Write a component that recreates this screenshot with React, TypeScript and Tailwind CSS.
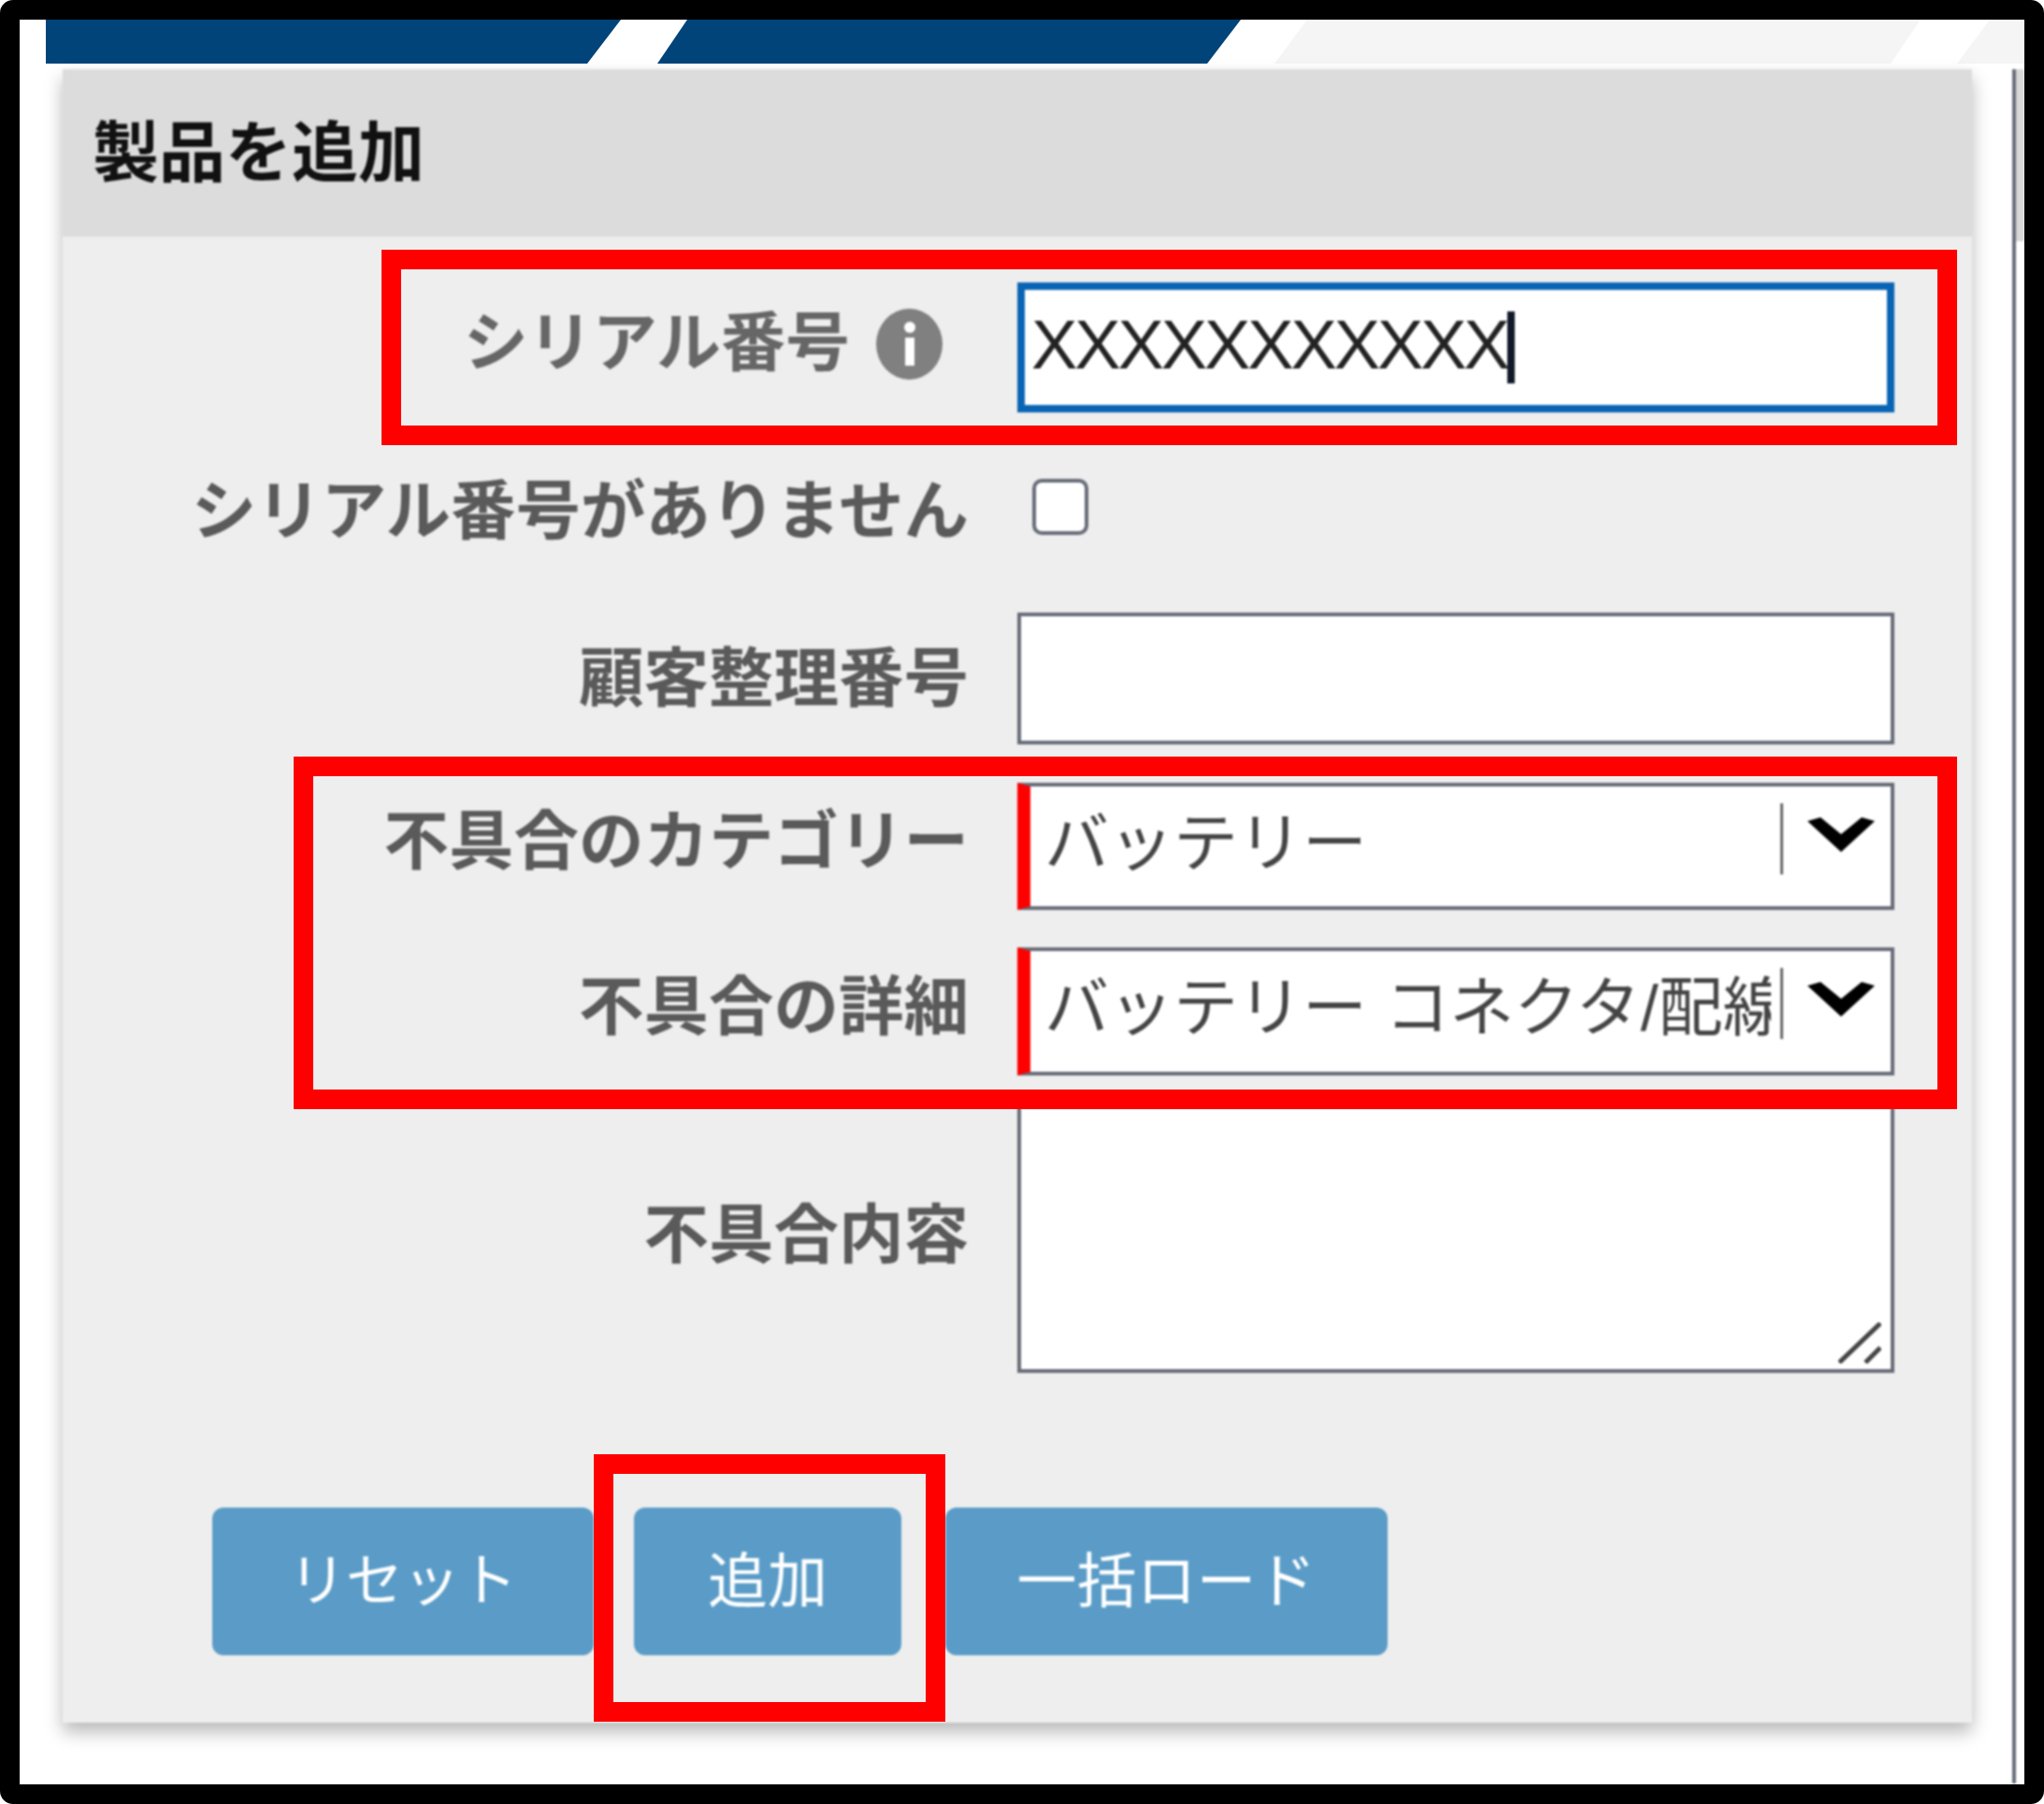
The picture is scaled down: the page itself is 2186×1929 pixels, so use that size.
const labelClass = "w-[969px] shrink-0 text-right text-[69.5px] leading-none font-bold text-[#5a5a5a] whitespace-nowrap";

function Chevron() {
  return (
    <svg width="72" height="37" viewBox="0 0 72 37" className="shrink-0">
      <polygon points="0,4 14,0 36,18 58,0 72,4 36,37" fill="#000" />
    </svg>
  );
}

function InfoIcon() {
  return (
    <svg width="71" height="76" viewBox="0 0 71 76" className="ml-[28px] shrink-0">
      <ellipse cx="35.5" cy="38" rx="35.5" ry="38" fill="#808080" />
      <circle cx="36" cy="20" r="6" fill="#fff" />
      <rect x="31" y="31" width="10" height="30" fill="#fff" />
    </svg>
  );
}

function SelectBox({ text }: { text: string }) {
  return (
    <div className="flex h-full w-[938px] border-[4px] border-l-[14px] border-[#666b77] border-l-[#f00] bg-white">
      <div className="mt-[-6px] ml-[15px] flex min-w-0 flex-1 items-center overflow-hidden text-[69px] leading-none whitespace-nowrap text-[#444]">
        {text}
      </div>
      <div className="mt-[18px] ml-[10px] h-[76px] w-[3px] shrink-0 bg-[#666]" />
      <div className="mt-[33px] mr-[17px] ml-[26px]">
        <Chevron />
      </div>
    </div>
  );
}

function RedBox({ className }: { className: string }) {
  return <div className={`pointer-events-none absolute border-[21px] border-[#f00] ${className}`} />;
}

export default function App() {
  return (
    <div className="relative h-[1929px] w-[2186px] overflow-hidden rounded-[14px] border-[21px] border-black bg-white font-['Liberation_Sans','Noto_Sans_CJK_JP',sans-serif]">
      <svg width="2144" height="47" viewBox="0 0 2144 47" className="block">
        <polygon points="28,0 643,0 607,47 28,47" fill="#00447a" />
        <polygon points="714,0 1306,0 1270,47 682,47" fill="#00447a" />
        <polygon points="1377,0 2033,0 2001,47 1342,47" fill="#f5f5f5" />
        <polygon points="2107,0 2144,0 2144,47 2072,47" fill="#f5f5f5" />
      </svg>

      <div className="mt-[6px] flex items-start blur-[0.8px]">
        <div className="ml-[46px] w-[2042px] bg-[#eeeeee] shadow-[0_10px_18px_rgba(0,0,0,0.28)]">
          <div className="flex h-[179px] items-center bg-[#dcdcdc] pl-[32px] text-[71px] leading-none font-bold text-[#111]">
            製品を追加
          </div>

          <div className="pb-[72px]">
            <div className="mt-[49px] flex h-[139px] items-center">
              <div className="mt-[-8px] flex w-[941px] shrink-0 items-center justify-end">
                <span className="text-[69px] leading-none font-bold text-[#666] whitespace-nowrap">シリアル番号</span>
                <InfoIcon />
              </div>
              <div className="ml-[80px] flex h-full w-[938px] items-center border-[8px] border-[#0a64b4] bg-white pl-[7px]">
                <span className="mt-[-5px] text-[74px] leading-none tracking-[-3.1px] text-[#222]">XXXXXXXXXXX</span>
                <span className="h-[77px] w-[8px] bg-[#111827]" />
              </div>
            </div>

            <div className="mt-[71px] flex h-[60px] items-center">
              <div className={`${labelClass} mt-[12px] text-[68.5px]`}>シリアル番号がありません</div>
              <input
                type="checkbox"
                className="ml-[68px] h-[60px] w-[60px] appearance-none rounded-[10px] border-[4px] border-[#666b77] bg-white"
              />
            </div>

            <div className="mt-[83px] flex h-[141px] items-center">
              <div className={`${labelClass} mt-[2px]`}>顧客整理番号</div>
              <input type="text" className="ml-[52px] h-full w-[938px] border-[4px] border-[#666b77] bg-white" />
            </div>

            <div className="mt-[41px] flex h-[136px] items-center">
              <div className={`${labelClass} mt-[-8px]`}>不具合のカテゴリー</div>
              <div className="ml-[52px] h-full">
                <SelectBox text="バッテリー" />
              </div>
            </div>

            <div className="mt-[40px] flex h-[137px] items-center">
              <div className={`${labelClass} mt-[-8px]`}>不具合の詳細</div>
              <div className="ml-[52px] h-full">
                <SelectBox text="バッテリー コネクタ/配線" />
              </div>
            </div>

            <div className="mt-[31px] flex h-[287px] items-center">
              <div className={`${labelClass} mt-[-6px]`}>不具合内容</div>
              <div className="relative ml-[52px] h-full w-[938px]">
                <textarea className="block h-full w-full resize-none border-[4px] border-[#666b77] bg-white" />
                <svg width="46" height="44" viewBox="0 0 46 44" className="absolute right-[14px] bottom-[10px]">
                  <path d="M1 43 L45 1 M29 43 L45 27" stroke="#444" strokeWidth="5" fill="none" />
                </svg>
              </div>
            </div>

            <div className="mt-[144px] flex h-[158px] pl-[160px] text-[64px] leading-none text-white">
              <button className="w-[408px] rounded-[12px] bg-[#5a9cc7] text-[61px]">リセット</button>
              <button className="ml-[43px] w-[286px] rounded-[12px] bg-[#5a9cc7]">追加</button>
              <button className="ml-[47px] w-[473px] rounded-[12px] bg-[#5a9cc7]">一括ロード</button>
            </div>
          </div>
        </div>

        <div className="ml-[43px] h-[1833px] w-[13px] border-l-[4px] border-[#666b77]">
          <div className="h-[184px] bg-[#d8d8d8]" />
        </div>
      </div>

      <RedBox className="top-[246px] left-[387px] h-[209px] w-[1685px]" />
      <RedBox className="top-[788px] left-[293px] h-[377px] w-[1779px]" />
      <RedBox className="top-[1534px] left-[614px] h-[286px] w-[376px]" />
    </div>
  );
}
